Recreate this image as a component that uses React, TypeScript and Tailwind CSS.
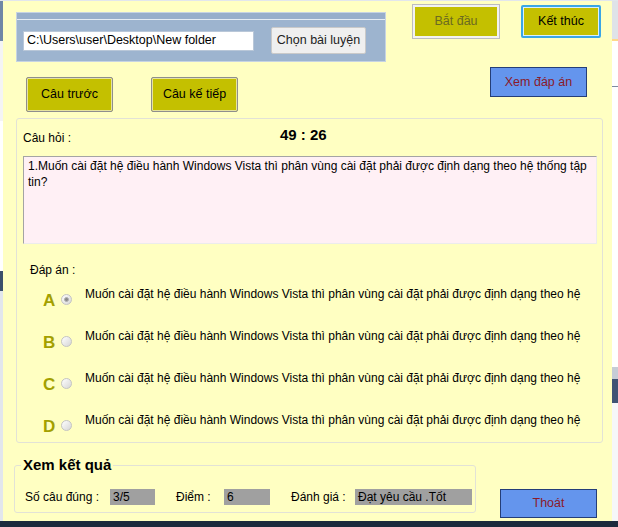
import React from "react";

const answers = ["A", "B", "C", "D"];
const answerText =
  "Muốn cài đặt hệ điều hành Windows Vista thì phân vùng cài đặt phải được định dạng theo hệ";

function Radio({ checked }: { checked?: boolean }) {
  return (
    <span className="w-[11px] h-[11px] rounded-full border border-[#c4c4c4] bg-linear-to-br from-[#ffffff] to-[#d6d6d6] flex items-center justify-center shrink-0">
      {checked && <span className="w-[5px] h-[5px] rounded-full bg-[#8a8a8a] border border-[#b0b0b0]" />}
    </span>
  );
}

export default function App() {
  return (
    <div className="w-[618px] h-[527px] overflow-hidden flex flex-col bg-[#e2e6ec] font-['Liberation_Sans',Arial,sans-serif] text-[12px] text-black">
      <div className="flex pt-[1px]">
        {/* desktop strip left */}
        <div className="w-[3px] flex flex-col">
          <div className="h-[40px] bg-[#6f86a6]" />
          <div className="h-[80px] bg-[#f4f4f4]" />
          <div className="h-[150px] bg-[#ffffff]" />
          <div className="h-[20px] bg-[#3b4f6b]" />
        </div>

        {/* window */}
        <div className="w-[609px] h-[520px] bg-[#ffffc2] flex flex-col">
          {/* top section */}
          <div className="flex items-start shrink-0">
            <div className="ml-[13px] w-[370px] flex flex-col">
              <div className="mt-[11px] h-[50px] bg-[#9db4cf] border border-[#c6d3e3] flex flex-col">
                <div className="h-[6px] bg-[#97aecb]" />
                <div className="h-[1px] bg-[#e4ebf3]" />
                <div className="flex-1 flex items-center pl-[6px]">
                  <div className="w-[231px] h-[20px] bg-white border border-[#b9c7d8] flex items-center pl-[3px] text-[12.5px]">
                    C:\Users\user\Desktop\New folder
                  </div>
                  <button className="ml-[17px] w-[95px] h-[27px] bg-[#efefef] border border-[#c9c9c9] rounded-[2px] text-[12.5px] text-[#222]">
                    Chọn bài luyện
                  </button>
                </div>
              </div>
              <div className="mt-[15px] flex gap-[38px] pl-[10px]">
                <button className="w-[87px] h-[35px] bg-[#c4c000] border border-[#8e8e8e] rounded-[2px] shadow-[inset_0_0_0_1px_#e6e3a0] text-[12.5px]">
                  Câu trước
                </button>
                <button className="w-[87px] h-[35px] bg-[#c4c000] border border-[#8e8e8e] rounded-[2px] shadow-[inset_0_0_0_1px_#e6e3a0] text-[12.5px]">
                  Câu kế tiếp
                </button>
              </div>
            </div>

            <div className="ml-[27px] flex flex-col">
              <div className="mt-[4px] flex gap-[22px]">
                <button className="w-[86px] h-[33px] bg-[#c4c000] border-2 border-[#f2f2f2] outline outline-[#bdbdbd] text-[12.5px] text-[#6b6a22]">
                  Bắt đầu
                </button>
                <button className="w-[80px] h-[33px] bg-[#c4c000] border-2 border-[#3aa6e6] rounded-[2px] shadow-[inset_0_0_0_1px_#d7f0ff] text-[12.5px]">
                  Kết thúc
                </button>
              </div>
              <button className="mt-[29px] ml-[77px] w-[97px] h-[30px] bg-[#6495ed] border border-[#243e78] text-[12.5px] text-[#8b1a2a]">
                Xem đáp án
              </button>
            </div>
          </div>

          {/* question box */}
          <div className="mt-[6px] ml-[13px] w-[587px] h-[325px] shrink-0 border border-[#e2e2d6] rounded-[3px] flex flex-col">
            <div className="mt-[8px] pl-[6px] flex items-start shrink-0">
              <span className="mt-[4px] w-[257px] leading-[15px]">Câu hỏi :</span>
              <span className="leading-[16px] text-[15px] font-bold">49 : 26</span>
            </div>
            <div className="mt-[10px] ml-[6px] w-[574px] h-[88px] shrink-0 bg-[#fff0f5] border border-t-[#a4a4a4] border-l-[#a4a4a4] border-r-[#ececec] border-b-[#ececec] pl-[4px] pt-[1px] leading-[16px]">
              1.Muốn cài đặt hệ điều hành Windows Vista thì phân vùng cài đặt phải được định dạng theo hệ thống tập tin?
            </div>
            <div className="mt-[19px] ml-[13px] leading-[15px] shrink-0">Đáp án :</div>
            <div className="mt-[9px] flex flex-col shrink-0">
              {answers.map((a, i) => (
                <div key={a} className={`${i < 3 ? "h-[42px]" : "h-[30px]"} flex items-start shrink-0`}>
                  <span className="ml-[26px] w-[18px] mt-[4px] leading-[20px] text-[17px] font-bold text-[#a3a000]">
                    {a}
                  </span>
                  <span className="mt-[7px]">
                    <Radio checked={i === 0} />
                  </span>
                  <span className="ml-[13px] leading-[15px]">{answerText}</span>
                </div>
              ))}
            </div>
          </div>

          {/* results */}
          <div className="ml-[11px] flex items-start shrink-0">
            <div className="relative mt-[22px] w-[462px] h-[48px] border border-[#e2e2d6] rounded-[3px] pt-[16px] pl-[10px] flex items-center">
              <span className="absolute -top-[10px] left-[6px] px-[2px] bg-[#ffffc2] text-[15px] font-bold leading-[18px]">
                Xem kết quả
              </span>
              <span className="w-[85px]">Số câu đúng :</span>
              <span className="w-[45px] h-[16px] bg-[#a0a0a0] pl-[3px] leading-[16px]">3/5</span>
              <span className="ml-[21px] w-[48px]">Điểm :</span>
              <span className="w-[46px] h-[16px] bg-[#a0a0a0] pl-[3px] leading-[16px]">6</span>
              <span className="ml-[21px] w-[64px]">Đánh giá :</span>
              <span className="w-[117px] h-[16px] bg-[#a0a0a0] pl-[3px] leading-[16px]">Đạt yêu cầu .Tốt</span>
            </div>
            <button className="mt-[46px] ml-[24px] w-[97px] h-[29px] bg-[#6495ed] border border-[#243e78] text-[12.5px] text-[#8b1a2a]">
              Thoát
            </button>
          </div>
        </div>

        {/* desktop strip right */}
        <div className="flex-1 flex flex-col bg-[#f6f7f9]">
          <div className="h-[38px] bg-[#dfe3e8]" />
          <div className="h-[2px] bg-[#ffd88a]" />
          <div className="h-[45px] bg-[#ffffff]" />
          <div className="h-[1px] bg-[#7d8aa0]" />
          <div className="h-[280px] bg-[#ffffff]" />
          <div className="h-[12px] bg-[#c6ccd6]" />
          <div className="h-[24px] bg-[#3f5474]" />
        </div>
      </div>
      <div className="flex-1 bg-[#1c2a3d]" />
    </div>
  );
}
